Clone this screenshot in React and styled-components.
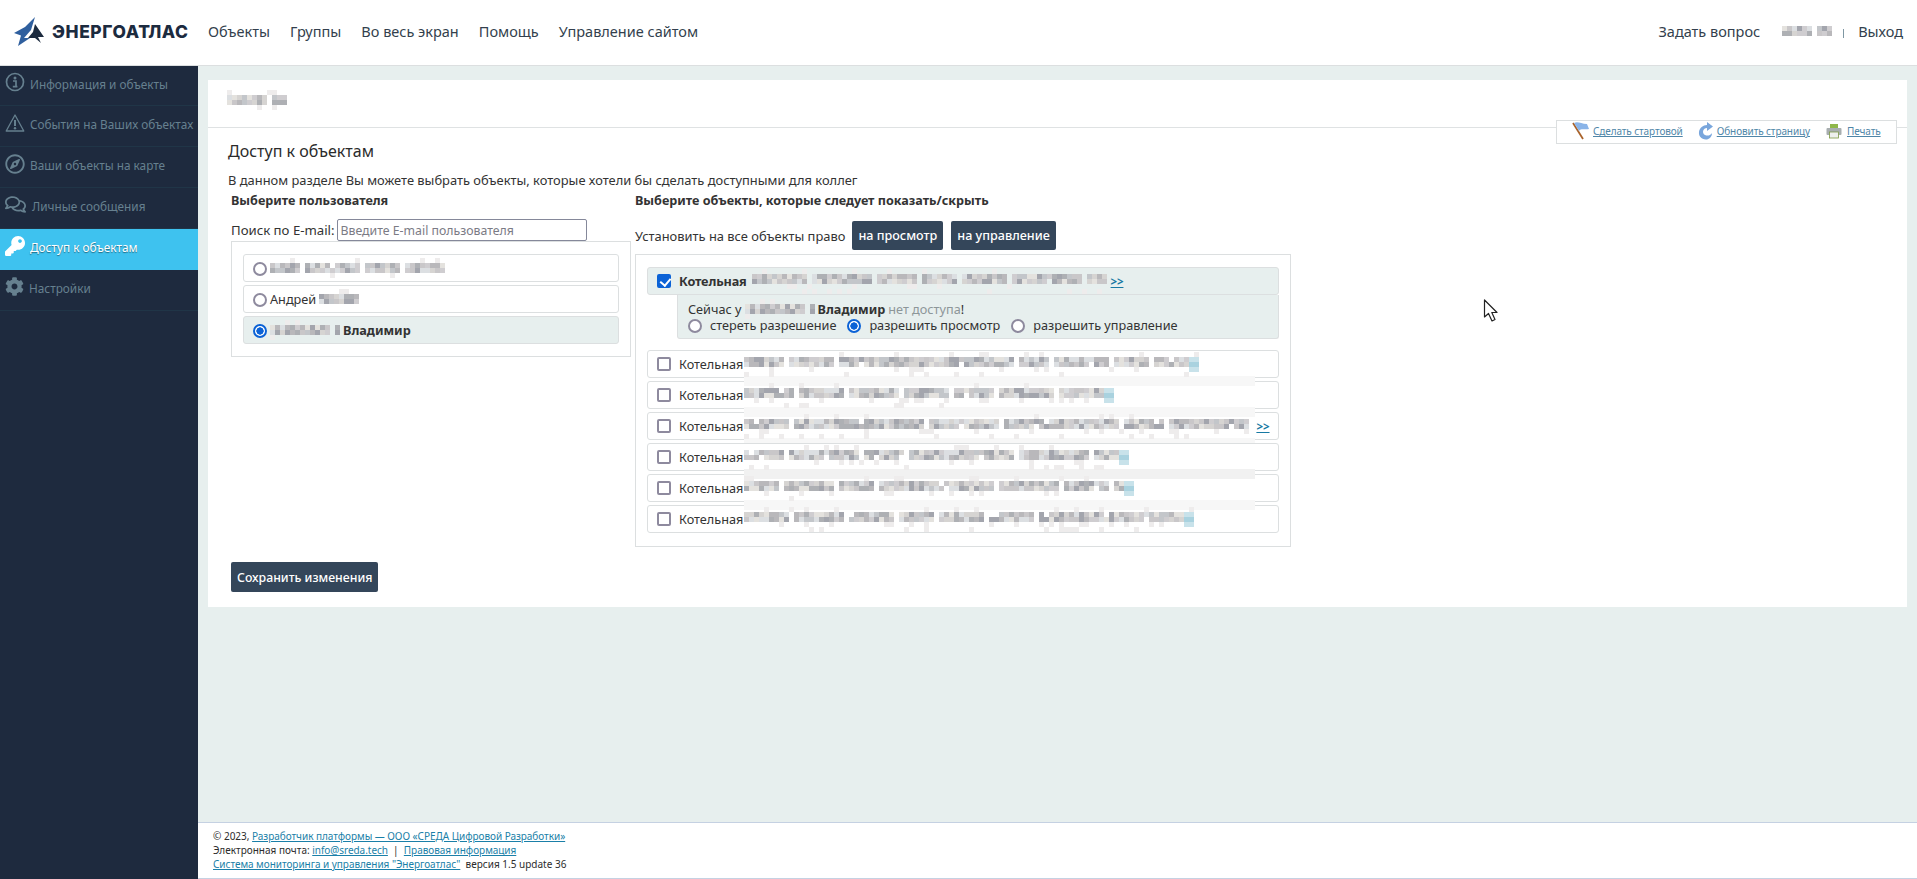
import React from 'react';
import styled, { createGlobalStyle } from 'styled-components';
import { FaRegCompass, FaRegComments, FaKey, FaCog } from 'react-icons/fa';

const GlobalStyle = createGlobalStyle`
    html, body { margin: 0; padding: 0; }
    body {
        font-family: "Noto Sans", "Open Sans", sans-serif;
        font-size: 13px;
        color: #333;
        background: #e7efee;
    }
    * { box-sizing: border-box; }
`;

const Page = styled.div`
    height: 879px;
    display: flex;
    flex-direction: column;
    overflow: hidden;
    position: relative;
`;

/* header */
const Header = styled.header`
    height: 66px;
    flex: none;
    display: flex;
    align-items: center;
    padding: 0 14px 3px;
    background: #fff;
    border-bottom: 1px solid #dcdfe0;
`;
const Logo = styled.div`
    width: 194px;
    display: flex;
    align-items: center;
    gap: 8px;
`;
const LogoText = styled.span`
    font-family: Inter, "Liberation Sans", sans-serif;
    font-weight: 800;
    font-size: 17.4px;
    letter-spacing: 0.6px;
    color: #1c2b3f;
`;
const TopNav = styled.nav`
    display: flex;
    gap: 20px;
    flex: 1;
`;
const TopLink = styled.a`
    font-size: 14.5px;
    color: #333f4d;
`;
const UserBox = styled.div`
    display: flex;
    align-items: center;
`;
const NameSlot = styled.div`
    margin-left: 22px;
    display: flex;
`;
const Divider = styled.span`
    width: 1px;
    height: 9px;
    margin: 4px 14px 0 11px;
    background: #7f97a3;
`;

/* layout */
const Body = styled.div`
    flex: 1;
    display: flex;
    min-height: 0;
`;
const Sidebar = styled.aside`
    width: 198px;
    flex: none;
    background: #1e2a3e;
`;
const SideItem = styled.a`
    height: 41px;
    display: flex;
    align-items: center;
    gap: ${p => p.$gap || 5}px;
    padding: 0 0 4px 5px;
    font-size: 11.8px;
    color: ${p => (p.$active ? '#fff' : '#66808f')};
    background: ${p => (p.$active ? '#3ec2ef' : 'transparent')};
    border-bottom: 1px solid ${p => (p.$active ? '#3ec2ef' : '#203547')};
    text-shadow: ${p => (p.$active ? '0 1px 1px rgba(0,0,0,.45)' : 'none')};
    white-space: nowrap;
    &:first-child { height: 40px; }
    svg { flex: none; margin-top: -3px; }
`;
const Main = styled.main`
    flex: 1;
    min-width: 0;
    display: flex;
    flex-direction: column;
`;
const Content = styled.div`
    flex: 1;
    padding: 14px 10px 0;
`;
const Card = styled.section`
    height: 527px;
    background: #fff;
    position: relative;
`;
const CardTop = styled.div`
    height: 48px;
    padding: 10px 0 0 19px;
    border-bottom: 1px solid #dfe2e3;
`;
const Tools = styled.div`
    position: absolute;
    top: 40px;
    right: 10px;
    width: 341px;
    height: 24px;
    display: flex;
    align-items: center;
    padding: 0 0 2px 15px;
    background: #fff;
    border: 1px solid #dcdfe0;
`;
const ToolLink = styled.a`
    display: flex;
    align-items: center;
    gap: ${p => p.$gap || 3}px;
    margin-right: ${p => p.$after || 0}px;
    font-size: 10px;
    letter-spacing: -0.1px;
    color: #4f86a8;
    white-space: nowrap;
    span { text-decoration: underline; }
`;
const CardBody = styled.div`
    padding: 11px 0 0 20px;
`;
const Title = styled.h1`
    margin: 0;
    font-size: 16px;
    line-height: 24px;
    font-weight: 400;
    color: #2b2b2b;
`;
const Intro = styled.p`
    margin: 8px 0 0;
    font-size: 12.9px;
    line-height: 18px;
`;
const Columns = styled.div`
    display: flex;
    margin-top: 3px;
    padding-left: 3px;
`;
const UserColumn = styled.div`
    width: 404px;
    flex: none;
`;
const ObjectColumn = styled.div`
    width: 656px;
    flex: none;
`;
const ColumnTitle = styled.h3`
    margin: 0;
    font-size: 12.6px;
    line-height: 18px;
    font-weight: 700;
`;
const SearchRow = styled.div`
    height: 22px;
    margin-top: 9px;
    display: flex;
    align-items: center;
    gap: 2px;
    font-size: 13.2px;
`;
const SearchInput = styled.input`
    width: 250px;
    height: 22px;
    padding: 0 3px;
    border: 1px solid #85889a;
    border-radius: 2px;
    font: inherit;
    font-size: 12.3px;
    &::placeholder { color: #7b7b85; }
`;
const UserList = styled.div`
    width: 400px;
    height: 116px;
    padding: 12px 11px 0;
    display: flex;
    flex-direction: column;
    gap: 3px;
    border: 1px solid #dcdfe0;
`;
const UserRow = styled.label`
    height: 28px;
    display: flex;
    align-items: center;
    gap: 3px;
    padding-left: 9px;
    font-size: 12.7px;
    font-weight: ${p => (p.$on ? 700 : 400)};
    background: ${p => (p.$on ? '#e7efee' : '#fff')};
    border: 1px solid #dcdfe0;
    border-radius: 3px;
`;
const Radio = styled.input.attrs({ type: 'radio', readOnly: true })`
    appearance: none;
    width: 14px;
    height: 14px;
    flex: none;
    margin: 1px 0 0;
    background: #fff;
    border: 2px solid #8e8a9e;
    border-radius: 50%;
    &:checked {
        border-color: #0b62d6;
        background: radial-gradient(circle, #0b62d6 0 3.4px, #fff 3.9px);
    }
`;
const Check = styled.input.attrs({ type: 'checkbox', readOnly: true })`
    appearance: none;
    position: relative;
    width: 14px;
    height: 14px;
    flex: none;
    margin: 0;
    background: #fff;
    border: 2px solid #8e8a9e;
    border-radius: 2px;
    &:checked { background: #0b62d6; border-color: #0b62d6; }
    &:checked::before {
        content: '';
        position: absolute;
        left: 3px;
        top: 0;
        width: 5px;
        height: 8px;
        border: solid #fff;
        border-width: 0 2px 2px 0;
        transform: rotate(40deg);
    }
`;
const SetRow = styled.div`
    height: 29px;
    margin-top: 11px;
    display: flex;
    align-items: center;
    font-size: 12.9px;
`;
const DarkButton = styled.button`
    height: ${p => p.$h || 29}px;
    margin-left: ${p => p.$left || 0}px;
    padding: 0 6px;
    border: 0;
    border-radius: 2px;
    font: inherit;
    font-size: ${p => p.$size || 12.6}px;
    font-weight: 500;
    color: #fff;
    background: #34465a;
`;
const ObjectBox = styled.div`
    height: 293px;
    margin-top: 4px;
    padding: 12px 11px 0;
    border: 1px solid #dcdfe0;
`;
const ObjectRow = styled.div`
    position: relative;
    height: 28px;
    margin-bottom: ${p => (p.$on ? 0 : 3)}px;
    display: flex;
    align-items: center;
    padding-left: 9px;
    font-size: 12.7px;
    background: ${p => (p.$on ? '#e7efee' : '#fff')};
    border: 1px solid #dcdfe0;
    border-radius: 3px;
    font-weight: ${p => (p.$on ? 700 : 400)};
    letter-spacing: ${p => (p.$on ? '-0.15px' : '0')};
`;
const RowName = styled.span`
    margin: 0 ${p => p.$gap || 1}px 0 8px;
`;
const Band = styled.i`
    position: absolute;
    z-index: 2;
    left: 96px;
    top: 25px;
    width: 511px;
    height: ${p => p.$h || 10}px;
    background: ${p => p.$c || '#f7f7f7'};
`;
const MosaicSlot = styled.span`
    position: relative;
    z-index: 3;
    display: inline-flex;
    line-height: 0;
`;
const MoreLink = styled.a`
    position: relative;
    z-index: 3;
    margin-left: 3px;
    font-size: 11.5px;
    font-weight: 700;
    color: #1779a3;
    text-decoration: underline;
`;
const Details = styled.div`
    height: 44px;
    margin: 0 0 11px 30px;
    padding: 6px 0 0 10px;
    background: #e7efee;
    border: 1px solid #dcdfe0;
    border-top: 0;
    border-radius: 0 0 3px 3px;
    font-size: 12.7px;
    line-height: 16px;
`;
const NowLine = styled.div`
    display: flex;
    align-items: center;
    gap: 3px;
    height: 16px;
    b { font-weight: 700; }
    em { font-style: normal; color: #8d9699; }
`;
const RightsLine = styled.div`
    display: flex;
    align-items: center;
`;
const RightLabel = styled.label`
    margin: 0 11px 0 8px;
`;
const SaveRow = styled.div`
    margin: 15px 0 0 3px;
`;

/* footer */
const Footer = styled.footer`
    height: 57px;
    flex: none;
    padding: 6px 0 0 15px;
    background: #fff;
    border-top: 1px solid #c5d1e2;
    border-bottom: 1px solid #c5d1e2;
    font-size: 10px;
    line-height: 14px;
    color: #2c2c2c;
    a { color: #1a7fa8; text-decoration: underline; letter-spacing: -0.04px; }
`;
const CursorMark = styled.svg`
    position: absolute;
    left: 1483px;
    top: 299px;
`;

/* pixelated (hidden) names, the same grid of grey squares as in the picture */
const greys = ['#c9c7c9', '#b9b8bb', '#d6d4d2', '#aeb0b4', '#dcdfe2', '#c3c6ca', '#a3a5ad', '#e4e2de', '#cfcdd0'];
const Mosaic = ({ w, h = 25, seed = 1, tail, cell = 5 }) => {
    let s = seed * 7919 + 13;
    const rnd = () => {
        s = (s * 16807) % 2147483647;
        return (s % 1000) / 1000;
    };
    const cols = Math.floor(w / cell);
    const rows = Math.floor(h / cell);
    const rects = [];
    let word = 6 + Math.floor(rnd() * 8);
    for (let x = 0; x < cols; x++) {
        word--;
        const gap = word === 0;
        if (word < 0) word = 6 + Math.floor(rnd() * 9);
        for (let y = 0; y < rows; y++) {
            const mid = y === 1 || y === 2;
            const chance = mid ? (gap ? 0.1 : 0.98) : 0.12;
            if (rnd() > chance) continue;
            const c = greys[Math.floor(rnd() * (mid ? greys.length : 3))];
            rects.push(<rect key={x + '-' + y} x={x * cell} y={y * cell} width={cell} height={cell} fill={mid ? c : '#eeecec'} />);
        }
    }
    if (tail) {
        rects.push(<rect key="t1" x={w - 10} y={5} width={10} height={15} fill="#c8e2ea" />);
        rects.push(<rect key="t2" x={w - 10} y={10} width={10} height={5} fill="#a9d2df" />);
    }
    return (
        <MosaicSlot>
            <svg width={w} height={h} shapeRendering="crispEdges">{rects}</svg>
        </MosaicSlot>
    );
};

const StarLogo = () => (
    <svg width="30" height="29" viewBox="0 0 30 29">
        <path d="M21 0 L11 10 L0 16 L7 18.5 L4 29 L16 21 L10 21 L17 13 Z" fill="#2f5f9e" />
        <path d="M21 7 L30 20 L24 20 L27 26 L21 21 L14 21 L19 15 Z" fill="#1c2b3f" />
    </svg>
);
const InfoIcon = () => (
    <svg width="20" height="20" viewBox="0 0 20 20" fill="none" stroke="currentColor">
        <circle cx="10" cy="10" r="8.5" strokeWidth="1.7" />
        <circle cx="10" cy="6" r="1.5" fill="currentColor" stroke="none" />
        <path d="M8 9h3v5.5M7.8 14.6h4.6" strokeWidth="1.7" />
    </svg>
);
const WarnIcon = () => (
    <svg width="20" height="20" viewBox="0 0 20 20" fill="none" stroke="currentColor">
        <path d="M10 2 L18.8 18 H1.2 Z" strokeWidth="1.3" strokeLinejoin="round" />
        <path d="M10 7v6" strokeWidth="2" />
        <circle cx="10" cy="15.3" r="1.2" fill="currentColor" stroke="none" />
    </svg>
);
const FlagIcon = () => (
    <svg width="18" height="18" viewBox="0 0 18 18">
        <path d="M1 1 L11 17" stroke="#a9622a" strokeWidth="1.8" />
        <path d="M2 1 C6 -1 9 2 15 2 L17 7 C12 8 9 6 7 9 Z" fill="#8ab4e8" />
    </svg>
);
const RefreshIcon = () => (
    <svg width="16" height="18" viewBox="0 0 16 18">
        <path d="M9 3 L9 0 L15 4.5 L9 9 L9 6 C5 6 3.5 11 7 13 C10 14.5 13 13 14 11 C14 15 11 17.5 8 17.5 C3 17.5 0.5 13.5 1 10 C1.5 6 5 3 9 3 Z" fill="#79a6dc" />
    </svg>
);
const PrinterIcon = () => (
    <svg width="16" height="16" viewBox="0 0 16 16">
        <rect x="4" y="1" width="8" height="5" fill="#8fb74a" />
        <rect x="0.5" y="5" width="15" height="7" rx="1" fill="#a8aeb0" />
        <rect x="3.5" y="9" width="9" height="6" fill="#eef0ee" stroke="#7d9a45" strokeWidth="0.8" />
    </svg>
);

const menu = [
    { icon: <InfoIcon />, text: 'Информация и объекты' },
    { icon: <WarnIcon />, text: 'События на Ваших объектах' },
    { icon: <FaRegCompass size={20} />, text: 'Ваши объекты на карте' },
    { icon: <FaRegComments size={21} />, text: 'Личные сообщения', gap: 6 },
    { icon: <FaKey size={20} />, text: 'Доступ к объектам', active: true },
    { icon: <FaCog size={19} />, text: 'Настройки' },
];

const objects = [
    { w: 455, seed: 3, band: {} },
    { w: 370, seed: 5, band: {} },
    { w: 509, seed: 8, more: true, band: { h: 5 } },
    { w: 385, seed: 11, band: { c: '#f1f1f1' } },
    { w: 390, seed: 14, band: {} },
    { w: 450, seed: 17 },
];

export default function App() {
    return (
        <Page>
            <GlobalStyle />
            <Header>
                <Logo>
                    <StarLogo />
                    <LogoText>ЭНЕРГОАТЛАС</LogoText>
                </Logo>
                <TopNav>
                    <TopLink>Объекты</TopLink>
                    <TopLink>Группы</TopLink>
                    <TopLink>Во весь экран</TopLink>
                    <TopLink>Помощь</TopLink>
                    <TopLink>Управление сайтом</TopLink>
                </TopNav>
                <UserBox>
                    <TopLink>Задать вопрос</TopLink>
                    <NameSlot><Mosaic w={50} h={20} seed={21} /></NameSlot>
                    <Divider />
                    <TopLink>Выход</TopLink>
                </UserBox>
            </Header>
            <Body>
                <Sidebar>
                    {menu.map(item => (
                        <SideItem key={item.text} $active={item.active} $gap={item.gap}>
                            {item.icon}
                            {item.text}
                        </SideItem>
                    ))}
                </Sidebar>
                <Main>
                    <Content>
                        <Card>
                            <CardTop>
                                <Mosaic w={60} h={20} seed={31} />
                            </CardTop>
                            <Tools>
                                <ToolLink $after={15}><FlagIcon /><span>Сделать стартовой</span></ToolLink>
                                <ToolLink $after={16}><RefreshIcon /><span>Обновить страницу</span></ToolLink>
                                <ToolLink $gap={5}><PrinterIcon /><span>Печать</span></ToolLink>
                            </Tools>
                            <CardBody>
                                <Title>Доступ к объектам</Title>
                                <Intro>В данном разделе Вы можете выбрать объекты, которые хотели бы сделать доступными для коллег</Intro>
                                <Columns>
                                    <UserColumn>
                                        <ColumnTitle>Выберите пользователя</ColumnTitle>
                                        <SearchRow>
                                            Поиск по E-mail:
                                            <SearchInput placeholder="Введите E-mail пользователя" />
                                        </SearchRow>
                                        <UserList>
                                            <UserRow>
                                                <Radio name="user" />
                                                <Mosaic w={175} h={20} seed={41} />
                                            </UserRow>
                                            <UserRow>
                                                <Radio name="user" />
                                                Андрей
                                                <Mosaic w={40} h={20} seed={43} />
                                            </UserRow>
                                            <UserRow $on>
                                                <Radio name="user" defaultChecked />
                                                <Mosaic w={70} h={20} seed={47} />
                                                Владимир
                                            </UserRow>
                                        </UserList>
                                    </UserColumn>
                                    <ObjectColumn>
                                        <ColumnTitle>Выберите объекты, которые следует показать/скрыть</ColumnTitle>
                                        <SetRow>
                                            Установить на все объекты право
                                            <DarkButton $left={7}>на просмотр</DarkButton>
                                            <DarkButton $left={8}>на управление</DarkButton>
                                        </SetRow>
                                        <ObjectBox>
                                            <ObjectRow $on>
                                                <Check defaultChecked />
                                                <RowName $gap={5}>Котельная</RowName>
                                                <Mosaic w={356} seed={51} />
                                                <MoreLink>&gt;&gt;</MoreLink>
                                            </ObjectRow>
                                            <Details>
                                                <NowLine>
                                                    Сейчас у <Mosaic w={70} h={20} seed={47} /> <b>Владимир</b> <span><em>нет доступа</em>!</span>
                                                </NowLine>
                                                <RightsLine>
                                                    <Radio name="right" />
                                                    <RightLabel>стереть разрешение</RightLabel>
                                                    <Radio name="right" defaultChecked />
                                                    <RightLabel>разрешить просмотр</RightLabel>
                                                    <Radio name="right" />
                                                    <RightLabel>разрешить управление</RightLabel>
                                                </RightsLine>
                                            </Details>
                                            {objects.map(o => (
                                                <ObjectRow key={o.seed}>
                                                    <Check />
                                                    <RowName>Котельная</RowName>
                                                    <Mosaic w={o.w} seed={o.seed} tail={!o.more} />
                                                    {o.more && <MoreLink>&gt;&gt;</MoreLink>}
                                                    {o.band && <Band $h={o.band.h} $c={o.band.c} />}
                                                </ObjectRow>
                                            ))}
                                        </ObjectBox>
                                    </ObjectColumn>
                                </Columns>
                                <SaveRow>
                                    <DarkButton $h={30} $size={12.3}>Сохранить изменения</DarkButton>
                                </SaveRow>
                            </CardBody>
                        </Card>
                    </Content>
                    <Footer>
                        <div>© 2023, <a>Разработчик платформы — ООО «СРЕДА Цифровой Разработки»</a></div>
                        <div>Электронная почта: <a>info@sreda.tech</a> &nbsp;|&nbsp; <a>Правовая информация</a></div>
                        <div><a>Система мониторинга и управления "Энергоатлас"</a> &nbsp;версия 1.5 update 36</div>
                    </Footer>
                </Main>
            </Body>
            <CursorMark width="16" height="25" viewBox="0 0 16 25">
                <path d="M1.5 1 V18 L5.5 14.5 L9 22 L12 20.5 L8.8 13.5 H14 Z" fill="#fff" stroke="#222" strokeWidth="1.2" strokeLinejoin="round" />
            </CursorMark>
        </Page>
    );
}
